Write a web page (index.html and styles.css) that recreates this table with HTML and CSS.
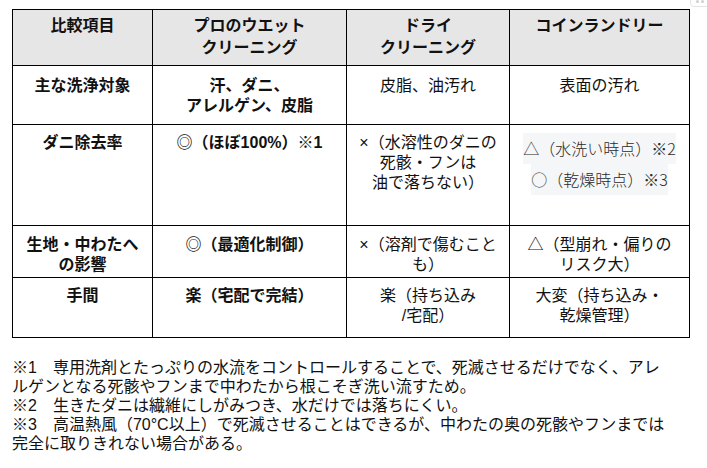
FILE: index.html
```html
<!DOCTYPE html>
<html lang="ja">
<head>
<meta charset="utf-8">
<title>比較表</title>
<link rel="stylesheet" href="styles.css">
</head>
<body>
<div class="page">
  <div class="handle"><span class="dot"></span><span class="dot"></span></div>
  <table class="cmp">
    <colgroup>
      <col class="c1"><col class="c2"><col class="c3"><col class="c4">
    </colgroup>
    <thead>
      <tr class="r-head">
        <th>比較項目</th>
        <th>プロのウエット<br>クリーニング</th>
        <th>ドライ<br>クリーニング</th>
        <th>コインランドリー</th>
      </tr>
    </thead>
    <tbody>
      <tr class="r-target">
        <th>主な洗浄対象</th>
        <td class="pro">汗、ダニ、<br>アレルゲン、皮脂</td>
        <td>皮脂、油汚れ</td>
        <td>表面の汚れ</td>
      </tr>
      <tr class="r-mite">
        <th>ダニ除去率</th>
        <td class="pro">◎（ほぼ100%）※1</td>
        <td>×（水溶性のダニの<br>死骸・フンは<br>油で落ちない）</td>
        <td class="pasted-cell">
          <div class="pasted">△（水洗い時点）※2</div>
          <div class="pasted">○（乾燥時点）※3</div>
        </td>
      </tr>
      <tr class="r-fabric">
        <th>生地・中わたへ<br>の影響</th>
        <td class="pro">◎（最適化制御）</td>
        <td>×（溶剤で傷むこと<br>も）</td>
        <td>△（型崩れ・偏りの<br>リスク大）</td>
      </tr>
      <tr class="r-effort">
        <th>手間</th>
        <td class="pro">楽（宅配で完結）</td>
        <td>楽（持ち込み<br>/宅配）</td>
        <td>大変（持ち込み・<br>乾燥管理）</td>
      </tr>
    </tbody>
  </table>

  <div class="notes">
    <p class="note">※1　専用洗剤とたっぷりの水流をコントロールすることで、死滅させるだけでなく、アレ<br>ルゲンとなる死骸やフンまで中わたから根こそぎ洗い流すため。</p>
    <p class="note">※2　生きたダニは繊維にしがみつき、水だけでは落ちにくい。</p>
    <p class="note">※3　高温熱風（70°C以上）で死滅させることはできるが、中わたの奥の死骸やフンまでは<br>完全に取りきれない場合がある。</p>
  </div>
</div>
</body>
</html>
```

FILE: styles.css
```css
html, body {
  margin: 0;
  padding: 0;
  background: #ffffff;
}

body {
  font-family: "Liberation Sans", "Noto Sans CJK JP", sans-serif;
  color: #111111;
  font-size: 16px;
}

.page {
  position: relative;
  padding: 9px 0 0 12px;
  width: 695px;
  height: 459px;
  overflow: hidden;
}

/* small drag handle peeking in at the top-right corner */
.handle {
  position: absolute;
  top: -6px;
  left: 690px;
  width: 26px;
  height: 13px;
  border: 1px solid #e4e4e4;
  border-radius: 4px;
  display: flex;
  align-items: flex-end;
  gap: 2px;
  padding: 0 0 3px 5px;
  box-sizing: border-box;
}

.dot {
  width: 3px;
  height: 3px;
  border-radius: 50%;
  background: #d0d0d0;
}

.cmp {
  border-collapse: collapse;
  table-layout: fixed;
  width: 677px;
  font-size: 16px;
  line-height: 20px;
}

.c1 { width: 140px; }
.c2 { width: 194px; }
.c3 { width: 163px; }
.c4 { width: 180px; }

.cmp th,
.cmp td {
  border: 1px solid #000000;
  text-align: center;
  vertical-align: top;
  padding: 9px 8px 0;
  font-weight: 400;
}

.cmp th,
.cmp td.pro {
  font-weight: 700;
}

.cmp thead th {
  background: #e6e6e6;
  line-height: 22px;
  padding-top: 5px;
}

.r-head   { height: 56px; }
.r-target { height: 59px; }
.r-mite   { height: 101px; }
.r-fabric { height: 52px; }
.r-effort { height: 60px; }

.r-target th, .r-target td { padding-top: 10px; }
.r-mite th, .r-mite td { padding-top: 8px; }
.r-fabric th, .r-fabric td { padding-top: 9px; }
.r-effort th, .r-effort td { padding-top: 8px; }

.pasted {
  display: table;
  margin: 0 auto;
  padding: 0 3px;
  line-height: 31px;
  background: #f5f6f7;
  color: #2a2a2a;
  font-family: "Noto Sans CJK JP", sans-serif;
  font-weight: 300;
}

.notes {
  margin-top: 20px;
  font-size: 16px;
  line-height: 19px;
  color: #111111;
}

.note {
  margin: 0;
}
```
